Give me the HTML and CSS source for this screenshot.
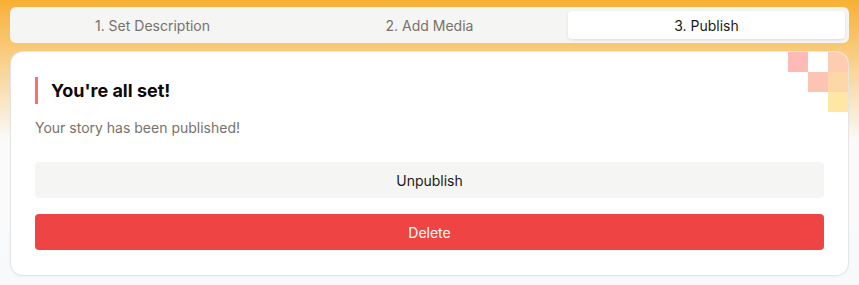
FILE: index.html
```html
<!DOCTYPE html>
<html lang="en">
<head>
    <meta charset="UTF-8">
    <meta name="viewport" content="width=device-width, initial-scale=1.0">
    <title>Publish Story</title>
    <link rel="stylesheet" href="styles.css">
</head>
<body>
    <div class="page">
        <nav class="steps">
            <div class="step">1. Set Description</div>
            <div class="step">2. Add Media</div>
            <div class="step step-active">3. Publish</div>
        </nav>

        <section class="card">
            <div class="pixels">
                <span class="px px-pink" style="grid-column: 1; grid-row: 1;"></span>
                <span class="px px-peach" style="grid-column: 3; grid-row: 1;"></span>
                <span class="px px-salmon" style="grid-column: 2; grid-row: 2;"></span>
                <span class="px px-orange" style="grid-column: 3; grid-row: 2;"></span>
                <span class="px px-yellow" style="grid-column: 3; grid-row: 3;"></span>
            </div>

            <h2 class="card-title">You're all set!</h2>
            <p class="card-text">Your story has been published!</p>

            <div class="actions">
                <button class="btn btn-muted">Unpublish</button>
                <button class="btn btn-danger">Delete</button>
            </div>
        </section>
    </div>
</body>
</html>
```

FILE: styles.css
```css
html, body {
    margin: 0;
    padding: 0;
    height: 100%;
}

body {
    font-family: Inter, "Noto Sans", sans-serif;
    color: #1c1917;
    background: linear-gradient(to bottom, #f8b034 0px, #fafafa 140px, #f8f9fa 100%);
}

.page {
    padding: 7px 10px 10px 10px;
    display: flex;
    flex-direction: column;
    gap: 9px;
}

.steps {
    display: grid;
    grid-template-columns: repeat(3, 1fr);
    padding: 4px;
    background-color: #f5f5f4;
    border-radius: 6px;
}

.step {
    height: 28px;
    display: flex;
    align-items: center;
    justify-content: center;
    font-size: 14px;
    color: #78716c;
    border-radius: 4px;
}

.step-active {
    background-color: white;
    color: #1c1917;
    box-shadow: 0 1px 3px rgba(0,0,0,0.1);
}

.card {
    position: relative;
    margin: 0 1px;
    padding: 24px 24px 25px 24px;
    background: white;
    border-radius: 12px;
    box-shadow: 0 0 0 1px #e7e5e4, 0 1px 3px rgba(0,0,0,0.08);
    overflow: hidden;
}

.pixels {
    position: absolute;
    top: 0;
    right: 0;
    display: grid;
    grid-template-columns: repeat(3, 20px);
    grid-template-rows: repeat(3, 20px);
}

.px-pink { background-color: #fdbab7; }
.px-peach { background-color: #fecdb1; }
.px-salmon { background-color: #fec4b3; }
.px-orange { background-color: #fed7a8; }
.px-yellow { background-color: #fee6a5; }

.card-title {
    margin: 1px 0 0 0;
    padding-left: 13px;
    border-left: 3px solid #f87171;
    font-size: 18px;
    line-height: 27px;
    font-weight: 700;
    color: #0c0a09;
}

.card-text {
    margin: 14px 0 0 0;
    font-size: 14px;
    line-height: 20px;
    color: #78716c;
}

.actions {
    margin-top: 24px;
    display: flex;
    flex-direction: column;
    gap: 16px;
}

.btn {
    height: 36px;
    border: none;
    border-radius: 4px;
    font-family: inherit;
    font-size: 14px;
    cursor: pointer;
}

.btn-muted {
    background-color: #f5f5f4;
    color: #1c1917;
}

.btn-danger {
    background-color: #ef4444;
    color: white;
}
```
